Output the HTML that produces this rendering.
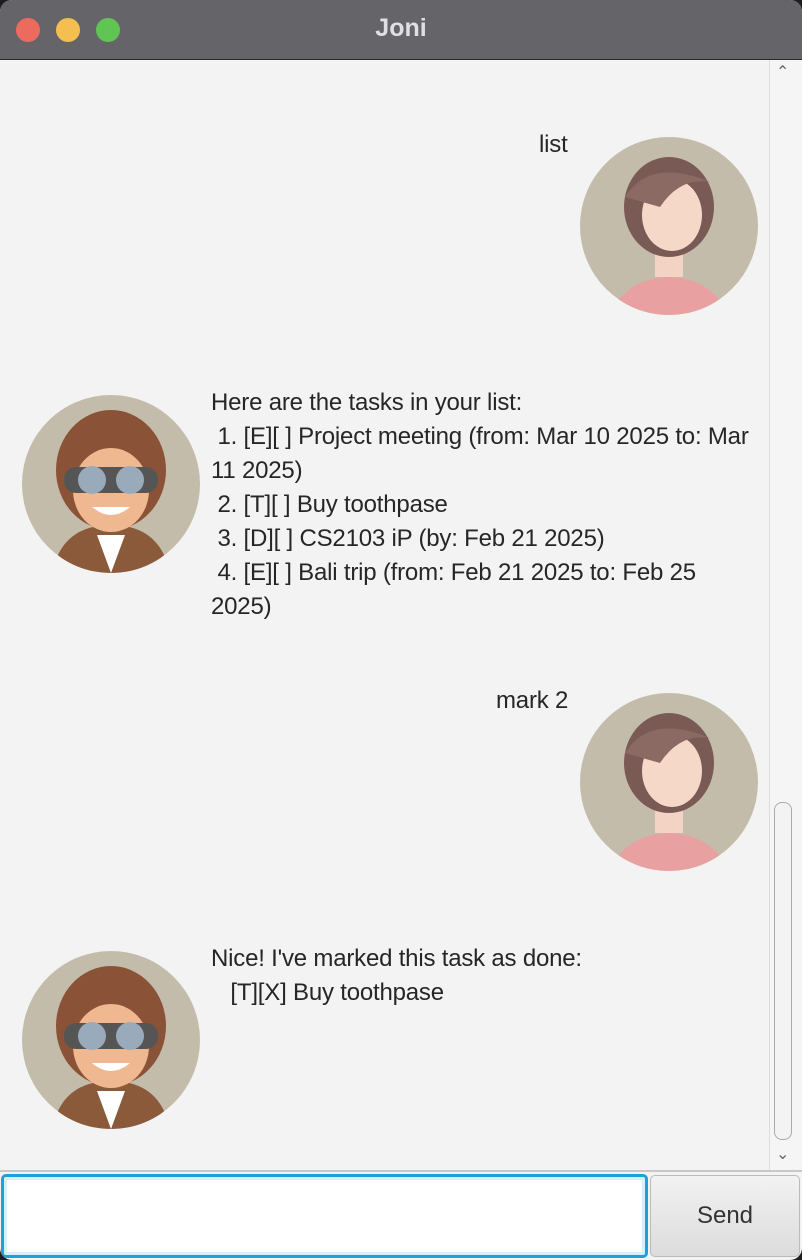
<!DOCTYPE html><html><head><style>
body{margin:0;width:802px;height:1260px;background:#1e1e1e;position:relative;overflow:hidden;font-family:"Liberation Sans",sans-serif}
.win{position:absolute;left:0;top:0;width:802px;height:1260px;border-radius:12px;overflow:hidden;background:#f3f3f3}
.tb{position:absolute;left:0;top:0;width:802px;height:59px;background:#646469;border-bottom:1px solid #2a2a2a}
.dot{position:absolute;top:18px;width:24px;height:24px;border-radius:50%}
.title{position:absolute;top:14px;width:802px;text-align:center;color:#e0e0e3;font-weight:bold;font-size:25px}
.t{position:absolute;font-size:24px;letter-spacing:-0.2px;color:#262626;line-height:34px;white-space:pre}
.av{position:absolute;width:178px;height:178px;border-radius:50%;background:#c4bcab;overflow:hidden}
.sb{position:absolute;left:769px;top:60px;width:32px;height:1110px;background:#f5f5f5;border-left:1px solid #ddd}
</style></head><body><div class="win">
<div class="tb"><div class="dot" style="left:16px;background:#ed6a5e"></div><div class="dot" style="left:56px;background:#f5bf4f"></div><div class="dot" style="left:96px;background:#61c554"></div><div class="title">Joni</div></div>
<div class="sb"><div style="position:absolute;left:6px;top:2px;font-size:16px;color:#666">&#8963;</div><div style="position:absolute;left:4px;top:742px;width:16px;height:336px;border:1px solid #aaa;border-radius:8px;background:#f3f3f3"></div><div style="position:absolute;left:6px;top:1084px;font-size:16px;color:#666">&#8964;</div></div>
<div class="t" style="left:539px;top:128px">list</div>
<div class="av" style="left:580px;top:137px"><svg width="178" height="178"><ellipse cx="89" cy="190" rx="60" ry="50" fill="#e8a0a0"/><rect x="75" y="100" width="28" height="40" fill="#f3d4c4"/><ellipse cx="89" cy="70" rx="45" ry="50" fill="#7a5a55"/><ellipse cx="92" cy="78" rx="30" ry="36" fill="#f5d8c8"/><path d="M45 60 Q70 20 130 45 Q100 40 80 70Z" fill="#8a6a62"/></svg></div>
<div class="t" style="left:211px;top:386px">Here are the tasks in your list:
 1. [E][ ] Project meeting (from: Mar 10 2025 to: Mar
11 2025)
 2. [T][ ] Buy toothpase
 3. [D][ ] CS2103 iP (by: Feb 21 2025)
 4. [E][ ] Bali trip (from: Feb 21 2025 to: Feb 25
2025)</div>
<div class="av" style="left:22px;top:395px"><svg width="178" height="178"><path d="M30 178 Q40 130 89 130 Q138 130 148 178Z" fill="#8a5a3a"/><path d="M75 140 L89 178 L103 140Z" fill="#fff"/><ellipse cx="89" cy="75" rx="55" ry="60" fill="#8a5236"/><ellipse cx="89" cy="95" rx="38" ry="42" fill="#f0b890"/><rect x="42" y="72" width="94" height="26" rx="12" fill="#555"/><circle cx="70" cy="85" r="14" fill="#9ab"/><circle cx="108" cy="85" r="14" fill="#9ab"/><path d="M70 112 Q89 128 108 112Z" fill="#fff"/></svg></div>
<div class="t" style="left:496px;top:684px">mark 2</div>
<div class="av" style="left:580px;top:693px"><svg width="178" height="178"><ellipse cx="89" cy="190" rx="60" ry="50" fill="#e8a0a0"/><rect x="75" y="100" width="28" height="40" fill="#f3d4c4"/><ellipse cx="89" cy="70" rx="45" ry="50" fill="#7a5a55"/><ellipse cx="92" cy="78" rx="30" ry="36" fill="#f5d8c8"/><path d="M45 60 Q70 20 130 45 Q100 40 80 70Z" fill="#8a6a62"/></svg></div>
<div class="t" style="left:211px;top:942px">Nice! I've marked this task as done:
   [T][X] Buy toothpase</div>
<div class="av" style="left:22px;top:951px"><svg width="178" height="178"><path d="M30 178 Q40 130 89 130 Q138 130 148 178Z" fill="#8a5a3a"/><path d="M75 140 L89 178 L103 140Z" fill="#fff"/><ellipse cx="89" cy="75" rx="55" ry="60" fill="#8a5236"/><ellipse cx="89" cy="95" rx="38" ry="42" fill="#f0b890"/><rect x="42" y="72" width="94" height="26" rx="12" fill="#555"/><circle cx="70" cy="85" r="14" fill="#9ab"/><circle cx="108" cy="85" r="14" fill="#9ab"/><path d="M70 112 Q89 128 108 112Z" fill="#fff"/></svg></div>
<div style="position:absolute;left:0;top:1170px;width:802px;height:2px;background:#c8c8c8"></div>
<div style="position:absolute;left:1px;top:1174px;width:641px;height:78px;background:#fff;border:3px solid #1ea0d8;border-radius:5px;box-shadow:inset 0 0 0 3px #d8eef8"></div>
<div style="position:absolute;left:650px;top:1175px;width:148px;height:80px;background:linear-gradient(#f2f2f2,#dcdcdc);border:1px solid #bbb;border-radius:5px;text-align:center;line-height:80px;font-size:24px;color:#333">Send</div>
</div></body></html>
